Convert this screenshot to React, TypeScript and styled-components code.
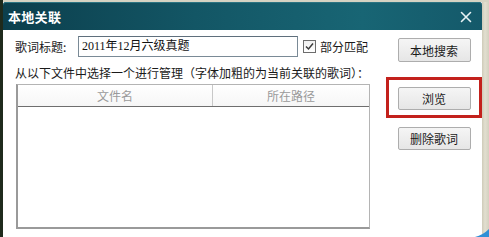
import React from "react";
import styled, { createGlobalStyle } from "styled-components";

const Global = createGlobalStyle`
  html, body { margin: 0; padding: 0; }
  body {
    width: 489px; height: 237px; overflow: hidden;
    background: #cfd3c6;
    font-family: "Noto Sans CJK SC", "Noto Sans", sans-serif;
  }
  #root { height: 237px; }
`;

const Desk = styled.div`
  position: relative;
  display: flex;
  height: 237px;
  padding-top: 2px;
  box-sizing: border-box;
  background: linear-gradient(90deg, #1f2a1c 0 3px, #d6d3c3 3px);
`;

const Window = styled.div`
  margin-left: 3px;
  width: 479px;
  display: flex;
  flex-direction: column;
  background: #ffffff;
`;

const RightEdge = styled.div`
  flex: 1;
  background: linear-gradient(90deg, #cfcbb9, #e2dfd0 3px, #d4d0bf);
`;

const TitleBar = styled.div`
  height: 28px;
  display: flex;
  align-items: center;
  justify-content: space-between;
  padding: 0 10px 0 5px;
  border-radius: 3px 3px 0 0;
  background: linear-gradient(90deg, #0c3f4d 0%, #135665 40%, #186574 75%, #14596a 100%);
  box-shadow: inset 0 1px 0 #2c7482;
`;

const Title = styled.span`
  color: #ffffff;
  font-size: 13px;
  font-weight: bold;
  letter-spacing: 0.3px;
`;

const Close = styled.svg`
  width: 12px;
  height: 12px;
  margin-top: 1px;
`;

const Body = styled.div`
  flex: 1;
  display: flex;
`;

const LeftPane = styled.div`
  width: 367px;
  padding-left: 12px;
  display: flex;
  flex-direction: column;
`;

const FieldRow = styled.div`
  margin-top: 6px;
  height: 21px;
  display: flex;
  align-items: center;
`;

const Label = styled.span`
  width: 63px;
  font-size: 12px;
  color: #1a1a1a;
  line-height: 21px;
`;

const TextInput = styled.div`
  width: 215px;
  height: 19px;
  border: 1px solid #7a8a96;
  border-top-color: #5f6f7c;
  padding-left: 3px;
  box-sizing: content-box;
  font-size: 12px;
  line-height: 19px;
  color: #111;
  font-family: "Liberation Serif", "Noto Sans CJK SC", serif;
`;

const CheckWrap = styled.div`
  margin-left: 5px;
  display: flex;
  align-items: center;
  width: 67px;
  overflow: hidden;
  white-space: nowrap;
`;

const Box = styled.div`
  width: 11px;
  height: 11px;
  border: 1px solid #6d6d6d;
  background: linear-gradient(#f0f0f0, #ffffff);
  display: flex;
  align-items: center;
  justify-content: center;
  flex-shrink: 0;
`;

const CheckText = styled.span`
  margin-left: 4px;
  font-size: 12px;
  color: #1a1a1a;
`;

const Hint = styled.div`
  margin-top: 8px;
  height: 16px;
  font-size: 12px;
  line-height: 16px;
  color: #1a1a1a;
  white-space: nowrap;
`;

const Table = styled.div`
  margin-top: 3px;
  margin-left: 1px;
  width: 354px;
  height: 145px;
  box-sizing: border-box;
  border: 1px solid #b4b4b4;
  border-left: 2px solid #9a9a9a;
  border-bottom: 2px solid #9a9a9a;
  display: flex;
  flex-direction: column;
`;

const Header = styled.div`
  height: 21px;
  display: grid;
  grid-template-columns: 195px 1fr;
  border-bottom: 1px solid #6e6e6e;
  background: linear-gradient(#ffffff, #f6f6f6);
`;

const HeadCell = styled.div<{ $last?: boolean }>`
  display: flex;
  align-items: center;
  justify-content: center;
  font-size: 12px;
  color: #9a9a9a;
  border-right: ${(p) => (p.$last ? "none" : "1px solid #c8c8c8")};
`;

const RightPane = styled.div`
  margin-left: 10px;
  width: 96px;
  padding-top: 8px;
  display: flex;
  flex-direction: column;
  align-items: center;
`;

const Button = styled.div<{ $h?: number }>`
  width: 73px;
  height: ${(p) => p.$h ?? 23}px;
  box-sizing: border-box;
  border: 1px solid #adadad;
  border-radius: 2px;
  background: linear-gradient(#f5f5f5, #e6e6e6);
  display: flex;
  align-items: center;
  justify-content: center;
  font-size: 12px;
  color: #1a1a1a;
  flex-shrink: 0;
`;

const Highlight = styled.div`
  margin-top: 15px;
  width: 96px;
  height: 41px;
  box-sizing: border-box;
  border: 3px solid #c3211c;
  display: flex;
  justify-content: center;
  padding-top: 7px;
`;

const Spacer = styled.div`
  height: 9px;
`;

const Corner = styled.svg`
  position: absolute;
  right: 0;
  bottom: 0;
  width: 14px;
  height: 8px;
`;

export default function App() {
  return (
    <>
      <Global />
      <Desk>
        <Window>
          <TitleBar>
            <Title>本地关联</Title>
            <Close viewBox="0 0 12 12">
              <path d="M1.5 1.5 L10.5 10.5 M10.5 1.5 L1.5 10.5" stroke="#e6f2f4" strokeWidth="1.6" strokeLinecap="round" />
            </Close>
          </TitleBar>
          <Body>
            <LeftPane>
              <FieldRow>
                <Label>歌词标题:</Label>
                <TextInput>2011年12月六级真题</TextInput>
                <CheckWrap>
                  <Box>
                    <svg width="9" height="9" viewBox="0 0 9 9">
                      <path d="M1 4.5 L3.5 7 L8 1.5" stroke="#3a3a3a" strokeWidth="1.5" fill="none" />
                    </svg>
                  </Box>
                  <CheckText>部分匹配</CheckText>
                </CheckWrap>
              </FieldRow>
              <Hint>从以下文件中选择一个进行管理（字体加粗的为当前关联的歌词）：</Hint>
              <Table>
                <Header>
                  <HeadCell>文件名</HeadCell>
                  <HeadCell $last>所在路径</HeadCell>
                </Header>
              </Table>
            </LeftPane>
            <RightPane>
              <Button $h={24}>本地搜索</Button>
              <Highlight>
                <Button>浏览</Button>
              </Highlight>
              <Spacer />
              <Button>删除歌词</Button>
            </RightPane>
          </Body>
        </Window>
        <RightEdge />
        <Corner viewBox="0 0 14 8">
          <path d="M0 8 Q8 6 14 0 L14 8 Z" fill="#2f8fd6" />
        </Corner>
      </Desk>
    </>
  );
}
